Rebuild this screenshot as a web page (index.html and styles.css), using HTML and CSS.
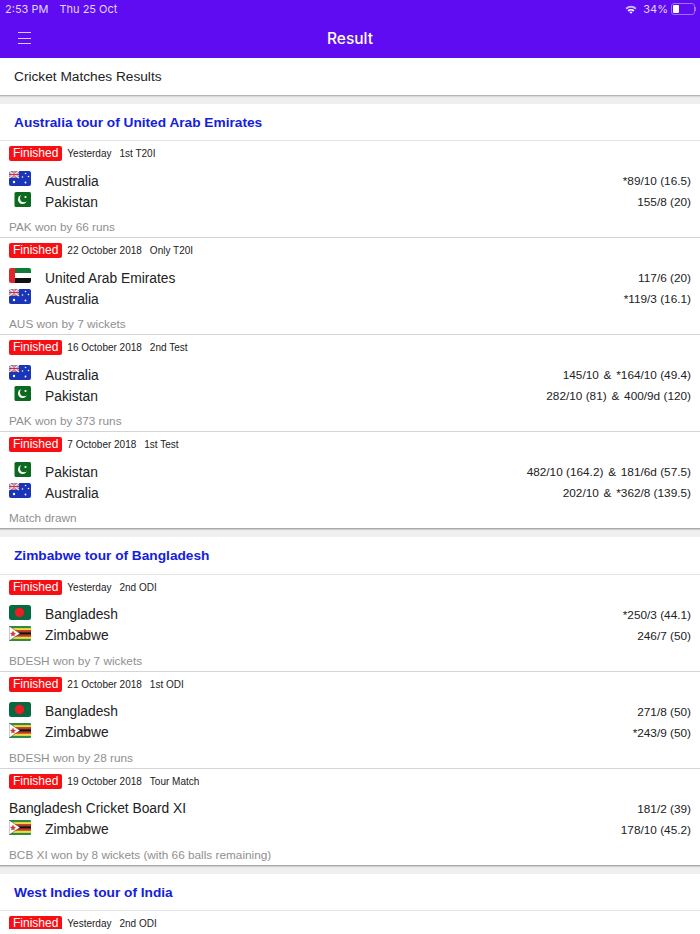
FILE: index.html
```html
<!DOCTYPE html>
<html lang="en">
<head>
    <meta charset="UTF-8">
    <title>Result</title>
    <meta name="viewport" content="width=device-width, initial-scale=1">
    <link rel="stylesheet" href="styles.css">
</head>
<body>
<svg class="defs" width="0" height="0">
    <defs>
        <symbol id="flag-aus" viewBox="0 0 22 15">
            <rect width="22" height="15" rx="2" fill="#1a35b8"/>
            <rect width="10" height="7" fill="#7d6f9f"/>
            <path d="M0 0L10 7M10 0L0 7" stroke="#f2e6ea" stroke-width="1.3"/>
            <path d="M5 0V7M0 3.5H10" stroke="#f2e6ea" stroke-width="2.2"/>
            <path d="M5 0V7M0 3.5H10" stroke="#d8283c" stroke-width="1"/>
            <circle cx="5" cy="11" r="1.2" fill="#fff"/>
            <circle cx="16.5" cy="2.5" r=".8" fill="#fff"/>
            <circle cx="13.5" cy="6" r=".8" fill="#fff"/>
            <circle cx="19.5" cy="5.5" r=".8" fill="#fff"/>
            <circle cx="16.5" cy="11.5" r=".9" fill="#fff"/>
        </symbol>
        <symbol id="flag-pak" viewBox="0 0 22 15">
            <rect x="5.5" width="16.5" height="15" rx="1.5" fill="#0b6a1f"/>
            <circle cx="13.5" cy="7.5" r="4.5" fill="#fff"/>
            <circle cx="15" cy="6.3" r="4" fill="#0b6a1f"/>
            <circle cx="16.5" cy="5" r="1.1" fill="#fff"/>
        </symbol>
        <symbol id="flag-uae" viewBox="0 0 22 15">
            <rect width="22" height="15" rx="2" fill="#fff"/>
            <path d="M6 0H20a2 2 0 0 1 2 2V5H6Z" fill="#0d7a3a"/>
            <path d="M6 10H22V13a2 2 0 0 1-2 2H6Z" fill="#111"/>
            <path d="M2 0H6V15H2a2 2 0 0 1-2-2V2a2 2 0 0 1 2-2Z" fill="#e0262c"/>
        </symbol>
        <symbol id="flag-ban" viewBox="0 0 22 15">
            <rect width="22" height="15" rx="2.5" fill="#06693f"/>
            <circle cx="10.5" cy="7.5" r="4.7" fill="#ee1c25"/>
        </symbol>
        <symbol id="flag-zim" viewBox="0 0 22 15">
            <rect width="22" height="15" rx="1" fill="#2f8c43"/>
            <rect y="2.1" width="22" height="2.2" fill="#f5d93a"/>
            <rect y="4.3" width="22" height="2.1" fill="#d8282c"/>
            <rect y="6.4" width="22" height="2.2" fill="#111"/>
            <rect y="8.6" width="22" height="2.1" fill="#d8282c"/>
            <rect y="10.7" width="22" height="2.2" fill="#f5d93a"/>
            <path d="M0 0L11 7.5L0 15Z" fill="#fff" stroke="#333" stroke-width=".5"/>
            <path d="M4 4.5L5 6.7L7 7L5.4 8.4L5.8 10.5L4 9.4L2.2 10.5L2.6 8.4L1 7L3 6.7Z" fill="#d8382c"/>
        </symbol>
    </defs>
</svg>

<div class="page">
    <div class="topbar">
        <div class="status">
            <span>2:53 PM</span>
            <span class="status-date">Thu 25 Oct</span>
            <span class="status-right">
                <svg class="wifi" viewBox="0 0 14 10" width="12" height="9">
                    <path d="M0.5 3.3A9.5 9.5 0 0 1 13.5 3.3L12 5A7.3 7.3 0 0 0 2 5Z" fill="#c9b2fb"/>
                    <path d="M3 6A5.6 5.6 0 0 1 11 6L9.5 7.5A3.6 3.6 0 0 0 4.5 7.5Z" fill="#fff"/>
                    <path d="M5.3 8.3A2.4 2.4 0 0 1 8.7 8.3L7 10Z" fill="#fff"/>
                </svg>
                <span class="percent">34%</span>
                <span class="battery"><span class="battery-level"></span></span>
                <span class="battery-tip"></span>
            </span>
        </div>
        <div class="navbar">
            <div class="menu-icon"><span></span><span></span><span></span></div>
            <div class="nav-title">Result</div>
        </div>
    </div>

    <div class="subtitle">Cricket Matches Results</div>

    <div class="series">
        <h3>Australia tour of United Arab Emirates</h3>
        <div class="match">
            <div class="meta"><span class="badge">Finished</span><span>Yesterday</span><span>1st T20I</span></div>
            <div class="team"><svg class="flag"><use href="#flag-aus"/></svg><span class="name">Australia</span><span class="score">*89/10 (16.5)</span></div>
            <div class="team"><svg class="flag"><use href="#flag-pak"/></svg><span class="name">Pakistan</span><span class="score">155/8 (20)</span></div>
            <div class="result">PAK won by 66 runs</div>
        </div>
        <div class="match">
            <div class="meta"><span class="badge">Finished</span><span>22 October 2018</span><span>Only T20I</span></div>
            <div class="team"><svg class="flag"><use href="#flag-uae"/></svg><span class="name">United Arab Emirates</span><span class="score">117/6 (20)</span></div>
            <div class="team"><svg class="flag"><use href="#flag-aus"/></svg><span class="name">Australia</span><span class="score">*119/3 (16.1)</span></div>
            <div class="result">AUS won by 7 wickets</div>
        </div>
        <div class="match">
            <div class="meta"><span class="badge">Finished</span><span>16 October 2018</span><span>2nd Test</span></div>
            <div class="team"><svg class="flag"><use href="#flag-aus"/></svg><span class="name">Australia</span><span class="score">145/10 <span class="amp">&amp;</span> *164/10 (49.4)</span></div>
            <div class="team"><svg class="flag"><use href="#flag-pak"/></svg><span class="name">Pakistan</span><span class="score">282/10 (81) <span class="amp">&amp;</span> 400/9d (120)</span></div>
            <div class="result">PAK won by 373 runs</div>
        </div>
        <div class="match">
            <div class="meta"><span class="badge">Finished</span><span>7 October 2018</span><span>1st Test</span></div>
            <div class="team"><svg class="flag"><use href="#flag-pak"/></svg><span class="name">Pakistan</span><span class="score">482/10 (164.2) <span class="amp">&amp;</span> 181/6d (57.5)</span></div>
            <div class="team"><svg class="flag"><use href="#flag-aus"/></svg><span class="name">Australia</span><span class="score">202/10 <span class="amp">&amp;</span> *362/8 (139.5)</span></div>
            <div class="result">Match drawn</div>
        </div>
    </div>

    <div class="series">
        <h3>Zimbabwe tour of Bangladesh</h3>
        <div class="match">
            <div class="meta"><span class="badge">Finished</span><span>Yesterday</span><span>2nd ODI</span></div>
            <div class="team"><svg class="flag"><use href="#flag-ban"/></svg><span class="name">Bangladesh</span><span class="score">*250/3 (44.1)</span></div>
            <div class="team"><svg class="flag"><use href="#flag-zim"/></svg><span class="name">Zimbabwe</span><span class="score">246/7 (50)</span></div>
            <div class="result">BDESH won by 7 wickets</div>
        </div>
        <div class="match">
            <div class="meta"><span class="badge">Finished</span><span>21 October 2018</span><span>1st ODI</span></div>
            <div class="team"><svg class="flag"><use href="#flag-ban"/></svg><span class="name">Bangladesh</span><span class="score">271/8 (50)</span></div>
            <div class="team"><svg class="flag"><use href="#flag-zim"/></svg><span class="name">Zimbabwe</span><span class="score">*243/9 (50)</span></div>
            <div class="result">BDESH won by 28 runs</div>
        </div>
        <div class="match">
            <div class="meta"><span class="badge">Finished</span><span>19 October 2018</span><span>Tour Match</span></div>
            <div class="team"><span class="name no-flag">Bangladesh Cricket Board XI</span><span class="score">181/2 (39)</span></div>
            <div class="team"><svg class="flag"><use href="#flag-zim"/></svg><span class="name">Zimbabwe</span><span class="score">178/10 (45.2)</span></div>
            <div class="result">BCB XI won by 8 wickets (with 66 balls remaining)</div>
        </div>
    </div>

    <div class="series">
        <h3>West Indies tour of India</h3>
        <div class="match">
            <div class="meta"><span class="badge">Finished</span><span>Yesterday</span><span>2nd ODI</span></div>
        </div>
    </div>
</div>
</body>
</html>
```

FILE: styles.css
```css
body { font-family: "Liberation Sans", Arial, sans-serif; background: #fff; margin: 0; padding: 0; color: #222; }
.defs { display: block; height: 0; }
.page { height: 929px; overflow: hidden; background: #efefef; }

.topbar { background: #5f0cf2; height: 58px; color: #fff; }
.status { display: flex; align-items: center; height: 18px; padding: 0 4px 0 5px; font-family: Inter, sans-serif; font-size: 11px; color: #e2d5fd; }
.status-date { margin-left: 11px; }
.status-right { margin-left: auto; display: flex; align-items: center; }
.wifi { margin-right: 1px; }
.percent { margin-left: 5px; margin-right: 3px; }
.battery { display: block; width: 20px; height: 8px; border: 1px solid #9a70f7; border-radius: 3px; padding: 1px; }
.battery-level { display: block; width: 6px; height: 100%; background: #fff; border-radius: 1px; }
.battery-tip { width: 1px; height: 4px; background: #9a70f7; }

.navbar { position: relative; display: flex; justify-content: center; align-items: center; height: 40px; }
.nav-title { font-family: Inter, sans-serif; font-size: 15.5px; font-weight: 500; }
.menu-icon { position: absolute; left: 18px; top: 14px; width: 13px; display: flex; flex-direction: column; gap: 4.5px; }
.menu-icon span { display: block; height: 1px; background: #d8c8fc; }

.subtitle { background: #fff; height: 37px; line-height: 37px; padding-left: 14px; font-size: 13.7px; border-bottom: 1px solid #b5b5b5; box-shadow: 0 1px 1px #d8d8d8; }

.series { background: #fff; margin-top: 8px; border-bottom: 1px solid #a9a9a9; box-shadow: 0 1px 1px #d0d0d0; }
.series h3 { margin: 0; height: 36.4px; line-height: 37px; padding-left: 14px; font-size: 13.7px; font-weight: bold; color: #1420e0; border-bottom: 1px solid #e4e4e4; }

.match { height: 96px; border-bottom: 1px solid #d4d4d4; }
.series .match:last-child { border-bottom: 0; }
.meta { display: flex; align-items: center; gap: 8px; height: 15px; padding: 5px 0 0 9px; font-size: 10px; color: #222; }
.badge { background: #f70f14; color: #fff; font-size: 12px; border-radius: 2px; padding: 0 4px; height: 15px; line-height: 15px; margin-right: -3px; }

.team { display: flex; align-items: center; height: 21px; font-size: 13.8px; }
.meta + .team { margin-top: 9.5px; }
.flag { width: 22px; height: 15px; margin: 0 14px 5px 9px; flex: none; }
.no-flag { margin-left: 9px; }
.score { margin-left: auto; padding-right: 9px; font-size: 11.8px; }
.amp { margin: 0 1.5px; }
.result { margin-top: 7.5px; height: 14px; line-height: 14px; padding-left: 9px; font-size: 11.8px; color: #8f8f8f; }
```
